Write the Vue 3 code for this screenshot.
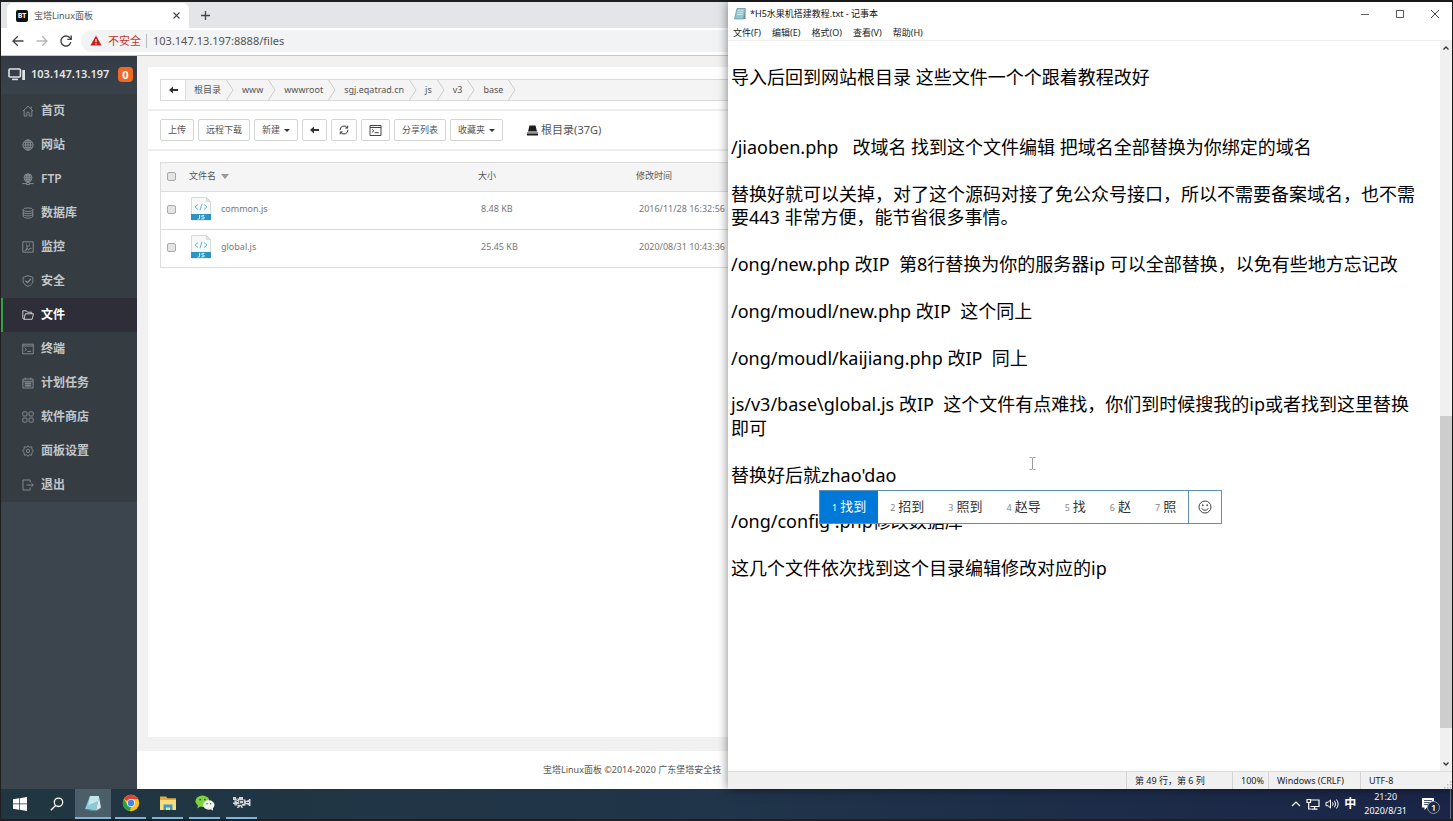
<script setup>
import { ref } from 'vue'

const address = ref('103.147.13.197:8888/files')

const nav = [
  { id: 'home', label: '首页' },
  { id: 'site', label: '网站' },
  { id: 'ftp', label: 'FTP' },
  { id: 'db', label: '数据库' },
  { id: 'monitor', label: '监控' },
  { id: 'safe', label: '安全' },
  { id: 'files', label: '文件' },
  { id: 'term', label: '终端' },
  { id: 'cron', label: '计划任务' },
  { id: 'store', label: '软件商店' },
  { id: 'config', label: '面板设置' },
  { id: 'exit', label: '退出' }
]
const current = 'files'

const crumbs = ['根目录', 'www', 'wwwroot', 'sgj.eqatrad.cn', 'js', 'v3', 'base']

const files = [
  { name: 'common.js', size: '8.48 KB', time: '2016/11/28 16:32:56' },
  { name: 'global.js', size: '25.45 KB', time: '2020/08/31 10:43:36' }
]

const menus = ['文件(F)', '编辑(E)', '格式(O)', '查看(V)', '帮助(H)']

const note = ref(
  [
    '导入后回到网站根目录 这些文件一个个跟着教程改好',
    '',
    '',
    '/jiaoben.php   改域名 找到这个文件编辑 把域名全部替换为你绑定的域名',
    '',
    '替换好就可以关掉，对了这个源码对接了免公众号接口，所以不需要备案域名，也不需要443 非常方便，能节省很多事情。',
    '',
    '/ong/new.php 改IP  第8行替换为你的服务器ip 可以全部替换，以免有些地方忘记改',
    '',
    '/ong/moudl/new.php 改IP  这个同上',
    '',
    '/ong/moudl/kaijiang.php 改IP  同上',
    '',
    'js/v3/base\\global.js 改IP  这个文件有点难找，你们到时候搜我的ip或者找到这里替换即可',
    '',
    "替换好后就zhao'dao",
    '',
    '/ong/config .php修改数据库',
    '',
    '这几个文件依次找到这个目录编辑修改对应的ip'
  ].join('\n')
)

const candidates = ['找到', '招到', '照到', '赵导', '找', '赵', '照']
</script>

<template>
  <div class="desktop">
    <div class="windows">
      <section class="browser">
        <div class="tabs">
          <div class="tab">
            <span class="favicon">BT</span>
            <span class="tab-title">宝塔Linux面板</span>
            <button class="plain" aria-label="关闭标签页">
              <svg width="9" height="9" viewBox="0 0 9 9"><path d="M1.5 1.5l6 6M7.5 1.5l-6 6" stroke="#444" stroke-width="1.1" /></svg>
            </button>
          </div>
          <button class="plain new-tab" aria-label="新标签页">
            <svg width="11" height="11" viewBox="0 0 11 11"><path d="M5.5 1v9M1 5.5h9" stroke="#444" stroke-width="1.3" /></svg>
          </button>
        </div>
        <div class="toolbar">
          <button class="plain" aria-label="后退">
            <svg width="14" height="14" viewBox="0 0 14 14" fill="none" stroke="#444" stroke-width="1.3"><path d="M12.5 7H2M6.8 2.2L2 7l4.8 4.8" /></svg>
          </button>
          <button class="plain" aria-label="前进">
            <svg width="14" height="14" viewBox="0 0 14 14" fill="none" stroke="#b4b6b8" stroke-width="1.3"><path d="M1.5 7H12M7.2 2.2L12 7l-4.8 4.8" /></svg>
          </button>
          <button class="plain" aria-label="刷新">
            <svg width="14" height="14" viewBox="0 0 14 14" fill="none" stroke="#444" stroke-width="1.4"><path d="M11.8 8.2A5 5 0 1 1 10.6 3.6L12 5" /><path d="M12.2 1.6v3.8H8.4" /></svg>
          </button>
          <div class="omnibox">
            <svg width="12" height="11" viewBox="0 0 12 11"><path d="M6 .5L11.6 10.5H.4z" fill="#c5221f" /><path d="M6 4v3.2M6 8.2v1.2" stroke="#fff" stroke-width="1.1" /></svg>
            <span class="unsafe">不安全</span>
            <input v-model="address" class="address" aria-label="地址" />
          </div>
        </div>

        <div class="panel">
          <aside class="sidebar">
            <header class="server">
              <svg width="18" height="14" viewBox="0 0 18 14" fill="none" stroke="#dfe2e5" stroke-width="1.6"><rect x="1" y="2" width="11.4" height="8" rx="1" /><path d="M4 12.4h6" /><path d="M15.6 3v10" stroke-width="2.8" /></svg>
              <b>103.147.13.197</b>
              <span class="badge">0</span>
            </header>
            <nav class="nav">
              <a v-for="item in nav" :key="item.id" href="#" class="nav-item" :class="{ active: item.id === current }">
                <svg class="nav-icon" width="12" height="12" viewBox="0 0 12 12">
                  <path v-if="item.id === 'home'" d="M.8 6.2L6 1.2l5.2 5M2.2 5.4v5.7h2.6V8.2a1.2 1.2 0 0 1 2.4 0v2.9h2.6V5.4M9.2 3.8V1.6" />
                  <g v-else-if="item.id === 'site'"><circle cx="6" cy="6" r="5.1" /><ellipse cx="6" cy="6" rx="2.4" ry="5.1" /><path d="M.9 6h10.2M1.7 3.4h8.6M1.7 8.6h8.6M6 .9v10.2" /></g>
                  <g v-else-if="item.id === 'ftp'"><circle cx="6" cy="4.8" r="4" /><ellipse cx="6" cy="4.8" rx="1.8" ry="4" /><path d="M2 4.8h8M2.6 2.8h6.8M2.6 6.8h6.8M6 .8v9M.3 10.6h4M7.7 10.6h4M4.4 9.7h3.2v1.8H4.4z" /></g>
                  <g v-else-if="item.id === 'db'"><ellipse cx="6" cy="2.7" rx="4.8" ry="1.8" /><path d="M1.2 2.7v6.6c0 1 2.1 1.8 4.8 1.8s4.8-.8 4.8-1.8V2.7M1.2 5c0 1 2.1 1.7 4.8 1.7S10.8 6 10.8 5M1.2 7.2c0 1 2.1 1.7 4.8 1.7s4.8-.7 4.8-1.7" /></g>
                  <g v-else-if="item.id === 'monitor'"><path d="M.8.8h10.4v10.4H.8z" /><path d="M2.5 9.3h1.7l1-2.8 1.3 2.8 1.2-1.9h1.8M4 3h1M7 3h1M4 5h4" /></g>
                  <g v-else-if="item.id === 'safe'"><path d="M6 .7l4.9 1.6v3.5c0 2.6-2 4.5-4.9 5.6-2.9-1.1-4.900-3-4.900-5.600V2.300z" /><path d="M3.500 5.800l2 1.900L8.900 4" stroke-width="1.200" /></g>
                  <path v-else-if="item.id === 'files'" d="M2.200 10.300L.8 9.400V1.800h3.600l1 1.400h4.300v1.600M2 10.300l1.300-5.500h8.200l-1.400 5.500z" />
                  <g v-else-if="item.id === 'term'"><path d="M.7 1.200h10.600v9.600H.7zM.7 3h10.600" /><path d="M2.600 5l1.800 1.500L2.600 8M5.300 8.400h3.900" /></g>
                  <path v-else-if="item.id === 'cron'" d="M.9 2h10.200v9H.9zM.9 4.300h10.200M3.300.6v2M8.700.6v2M2.600 6.300h6.800M2.600 8.600h6.800M4 5v5M6 5v5M8 5v5" />
                  <g v-else-if="item.id === 'store'"><rect x=".8" y=".8" width="4.200" height="4.200" rx="1" /><rect x="7" y=".8" width="4.200" height="4.200" rx="1" /><rect x=".8" y="7" width="4.200" height="4.200" rx="1" /><rect x="7" y="7" width="4.200" height="4.200" rx="1" /></g>
                  <g v-else-if="item.id === 'config'"><circle cx="6" cy="6" r="1.700" /><path d="M6 .7l1.300 1.500 2.400-.4.200 2.300 1.500 1.900-1.500 1.900-.2 2.300-2.400-.4L6 11.300 4.700 9.800l-2.400.4-.2-2.300L.6 6l1.500-1.900.2-2.300 2.400.4z" /></g>
                  <path v-else d="M8.200 3.400V1H1v10h7.200V8.600M4.500 6h6.800M9.400 4.200L11.300 6 9.400 7.800" />
                </svg>
                <span>{{ item.label }}</span>
              </a>
            </nav>
          </aside>

          <div class="content">
            <main class="card">
              <nav class="crumbs" aria-label="路径">
                <button class="crumb-back" aria-label="返回上一级">
                  <svg width="9" height="8" viewBox="0 0 9 8"><path d="M0 4l4-3.400v2.400h5v2H4v2.400z" fill="#333" /></svg>
                </button>
                <template v-for="c in crumbs" :key="c">
                  <a href="#" class="crumb">{{ c }}</a>
                  <svg class="chevron" width="8" height="20" viewBox="0 0 8 20"><path d="M.5 0l6.500 10-6.500 10" fill="none" stroke="#ccc" /></svg>
                </template>
              </nav>
              <div class="tools">
                <button class="btn">上传</button>
                <button class="btn">远程下载</button>
                <button class="btn">新建<i class="caret"></i></button>
                <button class="btn" aria-label="返回">
                  <svg width="9" height="8" viewBox="0 0 9 8"><path d="M0 4l4-3.400v2.400h5v2H4v2.400z" fill="#333" /></svg>
                </button>
                <button class="btn" aria-label="刷新列表">
                  <svg width="10" height="10" viewBox="0 0 10 10" fill="none" stroke="#333"><path d="M1 5.200A4 4 0 0 1 8.200 2.600M9 4.800A4 4 0 0 1 1.800 7.400" /><path d="M8.700.7v2.400H6.300M1.300 9.300V6.900h2.400" /></svg>
                </button>
                <button class="btn" aria-label="终端">
                  <svg width="13" height="11" viewBox="0 0 12 11" fill="none" stroke="#444"><path d="M.5.5h11v10H.5zM.5 2.500h11M2.500 4.300l1.800 1.500-1.800 1.500M5.200 7.700h4" /></svg>
                </button>
                <button class="btn">分享列表</button>
                <button class="btn">收藏夹<i class="caret"></i></button>
                <a href="#" class="disk">
                  <svg width="11" height="11" viewBox="0 0 11 11"><path d="M2.500.5h6l1.500 6H1zM0 7.300h11v3.200H0z" fill="#1c1c1c" /><path d="M0 8h11" stroke="#fff" stroke-width=".8" /></svg>
                  根目录(37G)
                </a>
              </div>
              <div class="list">
                <table>
                  <colgroup><col class="c-check" /><col class="c-name" /><col class="c-size" /><col /></colgroup>
                  <thead>
                    <tr>
                      <th><input type="checkbox" aria-label="全选" /></th>
                      <th>文件名<i class="sort"></i></th>
                      <th>大小</th>
                      <th>修改时间</th>
                    </tr>
                  </thead>
                  <tbody>
                    <tr v-for="f in files" :key="f.name">
                      <td><input type="checkbox" :aria-label="f.name" /></td>
                      <td>
                        <a href="#" class="file">
                          <svg width="20" height="24" viewBox="0 0 20 24"><path d="M.5.5h15l4 4V23H.5z" fill="#f7f8f8" stroke="#d5dadc" /><path d="M15.500.5v4h4z" fill="#dfe4e6" stroke="#ccd2d5" stroke-width=".6" /><path d="M7 7.500L4 10l3 2.500M13 7.500l3 2.500-3 2.500M11 6.800L9 13.200" fill="none" stroke="#62b4d4" /><path d="M0 17h20v6H0z" fill="#2895c3" /><path d="M8.600 18v3.200q0 .9-1 .9h-1M13.300 18.400h-1.800q-.9 0-.9.800t.9.800h.9q.9 0 .9.900t-.9.900h-2" fill="none" stroke="#e8f6fb" /></svg>
                          {{ f.name }}
                        </a>
                      </td>
                      <td>{{ f.size }}</td>
                      <td>{{ f.time }}</td>
                    </tr>
                  </tbody>
                </table>
              </div>
            </main>
            <footer class="foot">宝塔Linux面板 ©2014-2020 广东堡塔安全技</footer>
          </div>
        </div>
      </section>

      <section class="notepad">
        <header class="title">
          <svg width="12" height="13" viewBox="0 0 12 13"><path d="M3 1.500h8.500L9.500 12H.5z" fill="#8fc7d2" stroke="#5c95a2" stroke-width=".7" /><path d="M3.600 3.500h6M3.200 5.500h6M2.800 7.500h6" stroke="#d6eef2" stroke-width=".8" /><path d="M11.500 2v10L9.500 12z" fill="#6a8790" /></svg>
          <span class="title-text">*H5水果机搭建教程.txt - 记事本</span>
          <button class="plain" aria-label="最小化"><svg width="10" height="10" viewBox="0 0 10 10"><path d="M1 5.500h8" stroke="#666" /></svg></button>
          <button class="plain" aria-label="最大化"><svg width="10" height="10" viewBox="0 0 10 10"><path d="M1.500 1.500h7v7h-7z" fill="none" stroke="#555" /></svg></button>
          <button class="plain" aria-label="关闭"><svg width="10" height="10" viewBox="0 0 10 10"><path d="M1 1l8 8M9 1L1 9" stroke="#444" /></svg></button>
        </header>
        <nav class="menus">
          <button v-for="m in menus" :key="m" class="plain">{{ m }}</button>
        </nav>
        <div class="editor">
          <textarea v-model="note" class="note" aria-label="文本" spellcheck="false"></textarea>
          <div class="scroll">
            <button class="plain" aria-label="向上滚动"><svg width="8" height="6" viewBox="0 0 8 6"><path d="M1.500 4.500L4 2l2.500 2.500" fill="none" stroke="#333" stroke-width="1.300" /></svg></button>
            <div class="track"><div class="thumb"></div></div>
            <button class="plain" aria-label="向下滚动"><svg width="8" height="6" viewBox="0 0 8 6"><path d="M1.500 1.500L4 4l2.500-2.500" fill="none" stroke="#333" stroke-width="1.300" /></svg></button>
          </div>
          <svg class="cursor" width="7" height="13" viewBox="0 0 7 13"><path d="M.5.5h2l1 .6 1-.6h2M3.500 1v11M.5 12.500h2l1-.6 1 .6h2" fill="none" stroke="#999" /></svg>
          <div class="ime">
            <button v-for="(c, i) in candidates" :key="c" class="cand" :class="{ picked: i === 0 }"><small>{{ i + 1 }}</small>{{ c }}</button>
            <button class="emoji" aria-label="表情">
              <svg width="14" height="14" viewBox="0 0 14 14" fill="none" stroke="#444"><circle cx="7" cy="7" r="6" /><path d="M3.800 8.300c1 2.600 5.400 2.600 6.400 0" /><circle cx="4.800" cy="5.200" r=".5" fill="#444" /><circle cx="9.200" cy="5.200" r=".5" fill="#444" /></svg>
            </button>
          </div>
        </div>
        <footer class="status">
          <span class="s-pos">第 49 行，第 6 列</span>
          <span class="s-zoom">100%</span>
          <span class="s-eol">Windows (CRLF)</span>
          <span class="s-enc">UTF-8</span>
          <svg class="grip" width="8" height="8" viewBox="0 0 8 8" fill="#bbb"><path d="M6 0h1.500v1.500H6zM6 3h1.500v1.500H6zM3 3h1.500v1.500H3zM6 6h1.500v1.500H6zM3 6h1.500v1.500H3zM0 6h1.500v1.500H0z" /></svg>
        </footer>
      </section>
    </div>

    <footer class="taskbar">
      <button class="task" aria-label="开始"><svg width="14" height="14" viewBox="0 0 14 14" fill="#fff"><path d="M0 2.200L6 1.300v5.300H0zM6.700 1.200L14 .1v6.500H6.700zM0 7.300h6v5.400l-6-.9zM6.700 7.300H14v6.600l-7.300-1.100z" /></svg></button>
      <button class="task" aria-label="搜索"><svg width="14" height="14" viewBox="0 0 14 14" fill="none" stroke="#fff" stroke-width="1.300"><circle cx="8.500" cy="5.300" r="4.200" /><path d="M5.600 8.500L.8 13.200" /></svg></button>
      <button class="task open focus" aria-label="记事本"><svg width="18" height="17" viewBox="0 0 18 17"><path d="M6 1h9l-3 14.500L1 14z" fill="#8cc9d8" /><path d="M6 1h9l-1 5-9.500 4z" fill="#c4e6ee" /><path d="M15 1.500l2 11.500-5 2.500z" fill="#dfe8ea" /><path d="M5 15l7 .8 5-2.800" fill="none" stroke="#68919c" /></svg></button>
      <button class="task open" aria-label="Chrome"><svg width="18" height="18" viewBox="0 0 18 18"><circle cx="9" cy="9" r="8.200" fill="#fbc116" /><path d="M9 9L1.900 4.900A8.200 8.200 0 0 1 16.100 4.900H9z" fill="#e04435" /><path d="M1.900 4.900L5.500 11 9 13l-1.200 4.100A8.200 8.200 0 0 1 1.900 4.900z" fill="#24a04b" /><circle cx="9" cy="9" r="4.100" fill="#f3f3f3" /><circle cx="9" cy="9" r="3.200" fill="#4384ee" /></svg></button>
      <button class="task open" aria-label="资源管理器"><svg width="18" height="16" viewBox="0 0 18 16"><path d="M1 1.500h6l1.500 1.800H17V15H1z" fill="#e4ab37" /><path d="M1 5h16v10H1z" fill="#fbdc7a" /><path d="M4.500 15V9.500h9V15H11v-2.500H7V15z" fill="#3a9ccc" /></svg></button>
      <button class="task open" aria-label="微信"><svg width="20" height="16" viewBox="0 0 20 16"><ellipse cx="7.500" cy="6.200" rx="7" ry="5.700" fill="#7ed33f" /><path d="M3 10l-.6 3.400L6 11z" fill="#7ed33f" /><ellipse cx="13.800" cy="10" rx="5.700" ry="4.700" fill="#f2f6f2" /><path d="M15.500 14l2.600 1.700-.3-3z" fill="#f2f6f2" /><g fill="#2c5a2b"><circle cx="5.200" cy="4.600" r=".9" /><circle cx="9.800" cy="4.600" r=".9" /><circle cx="12" cy="8.700" r=".7" /><circle cx="15.600" cy="8.700" r=".7" /></g></svg></button>
      <button class="task open" aria-label="录像"><svg width="20" height="14" viewBox="0 0 20 14"><path d="M1 1h3v1.500h3V1h4v2.500h2.500v1.700L17 3.500V3h1.500v7H17v-.6l-3.500-1.700v2H10l1 2.300H9.500L8.500 10l-2 2H5l1-2.500H2.500V8H1V6.500h1.500V4H1z" fill="#cfd3d5" /><path d="M3.500 4.500l3 1.500M7.500 4.500h4v3h-4zM5 8.500h5M14 6.500h3M4 2.500l2 1" stroke="#30383c" fill="none" stroke-width=".8" /></svg></button>
      <div class="tray">
        <button class="plain" aria-label="显示隐藏的图标"><svg width="10" height="8" viewBox="0 0 10 8"><path d="M1 6l4-4 4 4" fill="none" stroke="#fff" stroke-width="1.200" /></svg></button>
        <svg width="14" height="12" viewBox="0 0 14 12" fill="none" stroke="#fff" stroke-width="1.200"><path d="M4.500 2h8.500v6.500H4.500M8.700 8.500v2.500M5.500 11.200h6" /><path d="M1 1.500h3.500v3H1zM2.700 4.500v6.500h2.500" /></svg>
        <svg width="14" height="12" viewBox="0 0 14 12" fill="none" stroke="#fff"><path d="M1 4.300h2L5.500 2v8L3 7.700H1zM7.500 4.300q1.300 1.700 0 3.400M9.500 2.800q2.200 3.200 0 6.400M11.500 1.500q3.200 4.500 0 9" /></svg>
        <span class="lang">中</span>
        <time class="clock"><span>21:20</span><span>2020/8/31</span></time>
        <button class="plain notice" aria-label="1 条新通知">
          <svg width="15" height="14" viewBox="0 0 15 14"><path d="M1 1h12v9.500H6L3.500 13v-2.500H1z" fill="#fff" /><path d="M3 3.500h8M3 5.500h8M3 7.500h5" stroke="#1b2a49" stroke-width=".8" /></svg>
          <span class="count">1</span>
        </button>
        <i class="peek"></i>
      </div>
    </footer>
  </div>
</template>

<style>
body {
  margin: 0;
  background: #201f20;
}
</style>

<style scoped>
.desktop {
  box-sizing: border-box;
  min-height: 100vh;
  padding: 2px 1px 2px;
  display: flex;
  flex-direction: column;
  background: #201f20;
  color: #555;
  font-family: "Noto Sans", "Noto Sans CJK SC", sans-serif;
  font-size: 9px;
  line-height: 14px;
}
.desktop * {
  box-sizing: border-box;
}
button,
input,
textarea {
  margin: 0;
  padding: 0;
  font: inherit;
  color: inherit;
}
button {
  cursor: pointer;
}
a {
  color: inherit;
  text-decoration: none;
}
svg {
  display: block;
  flex: none;
}
.plain {
  display: flex;
  align-items: center;
  justify-content: center;
  border: 0;
  background: none;
}
.windows {
  flex: 1;
  display: grid;
  grid-template-columns: minmax(0, 727fr) minmax(0, 724fr);
}

/* browser */
.browser {
  display: flex;
  flex-direction: column;
  overflow: hidden;
  background: #fff;
}
.tabs {
  height: 26px;
  padding-left: 6px;
  display: flex;
  align-items: flex-end;
  background: #e4e5e9;
}
.tab {
  width: 182px;
  height: 25px;
  padding: 0 8px 0 9px;
  display: flex;
  align-items: center;
  gap: 6px;
  border-radius: 6px 6px 0 0;
  background: #fff;
}
.favicon {
  width: 12px;
  height: 12px;
  border-radius: 2px;
  background: #111;
  color: #fff;
  font-size: 7px;
  font-weight: 700;
  line-height: 12px;
  text-align: center;
}
.tab-title {
  flex: 1;
}
.new-tab {
  width: 32px;
  height: 25px;
}
.toolbar {
  height: 28px;
  padding: 0 0 2px 10px;
  display: flex;
  align-items: center;
  gap: 10px;
  border-bottom: 1px solid #c8c9cb;
}
.omnibox {
  flex: 1;
  height: 22px;
  margin-left: -2px;
  padding-left: 9px;
  display: flex;
  align-items: center;
  gap: 6px;
  border-radius: 11px 0 0 11px;
  background: #f1f3f4;
}
.unsafe {
  padding-right: 5px;
  border-right: 1px solid #bbb;
  color: #c5372c;
  font-size: 11px;
}
.address {
  flex: 1;
  border: 0;
  background: none;
  color: #555;
  font-size: 11px;
  outline: none;
}
.panel {
  flex: 1;
  display: flex;
}
.sidebar {
  flex: none;
  width: 136px;
  background: #3c444d;
}
.server {
  height: 38px;
  padding: 0 4px 2px 7px;
  display: flex;
  align-items: center;
  background: linear-gradient(#343b44, #3a424c);
  color: #e4e6e8;
  font-size: 11px;
}
.server b {
  margin-left: 5px;
  flex: 1;
  font-weight: 600;
}
.badge {
  width: 15px;
  height: 15px;
  border-radius: 4px;
  background: #ee6a26;
  color: #fff;
  font-weight: 700;
  line-height: 15px;
  text-align: center;
}
.nav {
  background: #353d43;
}
.nav-item {
  height: 34px;
  padding-left: 19px;
  display: flex;
  align-items: center;
  gap: 7px;
  border-left: 2px solid transparent;
  color: #c3c6c9;
  font-size: 12px;
  font-weight: 600;
}
.nav-icon {
  fill: none;
  stroke: #8b9196;
  stroke-width: 0.9;
}
.nav-item.active {
  border-color: #35a04a;
  background: #2d2e37;
  color: #fff;
}
.active .nav-icon {
  stroke: #dcdddf;
}
.content {
  flex: 1;
  min-width: 0;
  display: flex;
  flex-direction: column;
  background: #f1f1f1;
}
.card {
  flex: 1;
  margin: 11px 0 14px 11px;
  background: #fff;
}
.crumbs {
  height: 22px;
  margin: 12px 0 8px 12px;
  display: flex;
  align-items: center;
  border: 1px solid #d9d9d9;
  border-right: 0;
  background: #f4f4f4;
  overflow: hidden;
}
.crumb-back {
  width: 25px;
  height: 20px;
  display: flex;
  align-items: center;
  justify-content: center;
  border: 0;
  border-right: 1px solid #ddd;
  background: #fff;
}
.crumb {
  padding: 0 5px 1px 8px;
  white-space: nowrap;
}
.tools {
  height: 42px;
  padding-left: 12px;
  display: flex;
  align-items: center;
  gap: 4px;
  border-top: 2px solid #eee;
  border-bottom: 2px solid #eee;
}
.btn {
  height: 22px;
  min-width: 25px;
  padding: 0 7px;
  display: flex;
  align-items: center;
  justify-content: center;
  border: 1px solid #d4d4d4;
  border-radius: 2px;
  background: #fff;
  white-space: nowrap;
}
.caret {
  margin-left: 4px;
  border: 3px solid transparent;
  border-top-color: #333;
  border-bottom: 0;
}
.disk {
  margin-left: 20px;
  display: flex;
  align-items: center;
  gap: 3px;
  font-size: 11px;
  white-space: nowrap;
}
.list {
  margin: 11px 0 0 12px;
  border: 1px solid #ddd;
  border-right: 0;
}
table {
  width: 100%;
  border-collapse: collapse;
  table-layout: fixed;
}
.c-check {
  width: 28px;
}
.c-name {
  width: 289px;
}
.c-size {
  width: 158px;
}
th {
  height: 28px;
  padding: 0 0 1px;
  background: #f5f5f5;
  font-weight: 400;
  text-align: left;
}
td {
  height: 38px;
  padding: 0 0 2px 3px;
  border-top: 1px solid #ddd;
  color: #777;
  white-space: nowrap;
}
th:first-child,
td:first-child {
  padding-left: 6px;
}
td:nth-child(2) {
  padding-left: 2px;
}
input[type="checkbox"] {
  appearance: none;
  display: block;
  width: 9px;
  height: 9px;
  border: 1px solid #aaa;
  border-radius: 2px;
  background: #e4e4e4;
}
.sort {
  display: inline-block;
  margin-left: 5px;
  border: 4px solid transparent;
  border-top: 5px solid #999;
  border-bottom: 0;
}
.file {
  display: flex;
  align-items: center;
  gap: 10px;
}
.foot {
  height: 38px;
  padding-left: 406px;
  line-height: 38px;
  background: #fff;
  white-space: nowrap;
  overflow: hidden;
}

/* notepad */
.notepad {
  position: relative;
  display: flex;
  flex-direction: column;
  background: #fff;
  color: #222;
  box-shadow: 0 0 10px rgba(0, 0, 0, 0.5);
}
.title {
  height: 23px;
  padding: 0 12px 0 6px;
  display: flex;
  align-items: center;
  gap: 25px;
  color: #111;
}
.title-text {
  flex: 1;
  margin-left: -21px;
}
.menus {
  height: 16px;
  padding-left: 5px;
  display: flex;
  gap: 11px;
  border-bottom: 1px solid #eee;
}
.editor {
  position: relative;
  flex: 1;
  display: flex;
}
.note {
  flex: 1;
  min-width: 0;
  padding: 25px 22px 0 3px;
  border: 0;
  outline: none;
  resize: none;
  overflow: hidden;
  background: #fff;
  color: #000;
  font-size: 18px;
  line-height: 1.3;
}
.scroll {
  width: 12px;
  display: flex;
  flex-direction: column;
  background: #f0f0f0;
}
.scroll .plain {
  height: 14px;
}
.track {
  flex: 1;
  padding-top: 361px;
}
.thumb {
  height: 312px;
  background: #cdcdcd;
}
.cursor {
  position: absolute;
  left: 301px;
  top: 416px;
}
.ime {
  position: absolute;
  left: 91px;
  top: 449px;
  height: 34px;
  display: flex;
  border: 1px solid #5b8fb5;
  background: #fff;
  color: #333;
  font-size: 13px;
}
.cand {
  padding: 0 12px;
  border: 0;
  background: none;
  white-space: nowrap;
}
.cand small {
  margin-right: 3px;
  color: #888;
  font-size: 9px;
}
.picked,
.picked small {
  background: #0078d7;
  color: #fff;
}
.emoji {
  width: 33px;
  display: flex;
  align-items: center;
  justify-content: center;
  border: 0;
  border-left: 1px solid #5b8fb5;
  background: none;
}
.status {
  height: 18px;
  display: flex;
  justify-content: flex-end;
  align-items: stretch;
  border-top: 1px solid #ddd;
  background: #f0f0f0;
  line-height: 17px;
  white-space: nowrap;
}
.status span {
  padding-left: 8px;
  border-left: 1px solid #d4d4d4;
}
.s-pos {
  width: 106px;
}
.s-zoom {
  width: 36px;
}
.s-eol {
  width: 92px;
}
.s-enc {
  width: 84px;
}
.grip {
  align-self: flex-end;
}

/* taskbar */
.taskbar {
  height: 30px;
  display: flex;
  background: linear-gradient(90deg, #203640, #20344a 50%, #1a2547);
  color: #fff;
}
.task {
  width: 37px;
  display: flex;
  align-items: center;
  justify-content: center;
  border: 0;
  background: none;
}
.open {
  width: 31px;
  margin: 0 3px;
  border-bottom: 2px solid #7db4dc;
}
.focus {
  width: 36px;
  margin: 0 1px 0 0;
  background: #4a5f68;
}
.tray {
  flex: 1;
  display: flex;
  justify-content: flex-end;
  align-items: center;
  gap: 5px;
}
.lang {
  font-size: 12px;
  font-weight: 600;
}
.clock {
  margin: 0 9px 0 3px;
  display: flex;
  flex-direction: column;
  align-items: center;
}
.notice {
  position: relative;
  margin-right: 9px;
}
.count {
  position: absolute;
  left: 6px;
  top: 4px;
  width: 13px;
  height: 13px;
  border: 1px solid #8a93a8;
  border-radius: 7px;
  background: #1b2947;
  font-weight: 600;
  line-height: 11px;
}
.peek {
  width: 1px;
  height: 30px;
  margin-right: 1px;
  background: #66708a;
}
</style>
